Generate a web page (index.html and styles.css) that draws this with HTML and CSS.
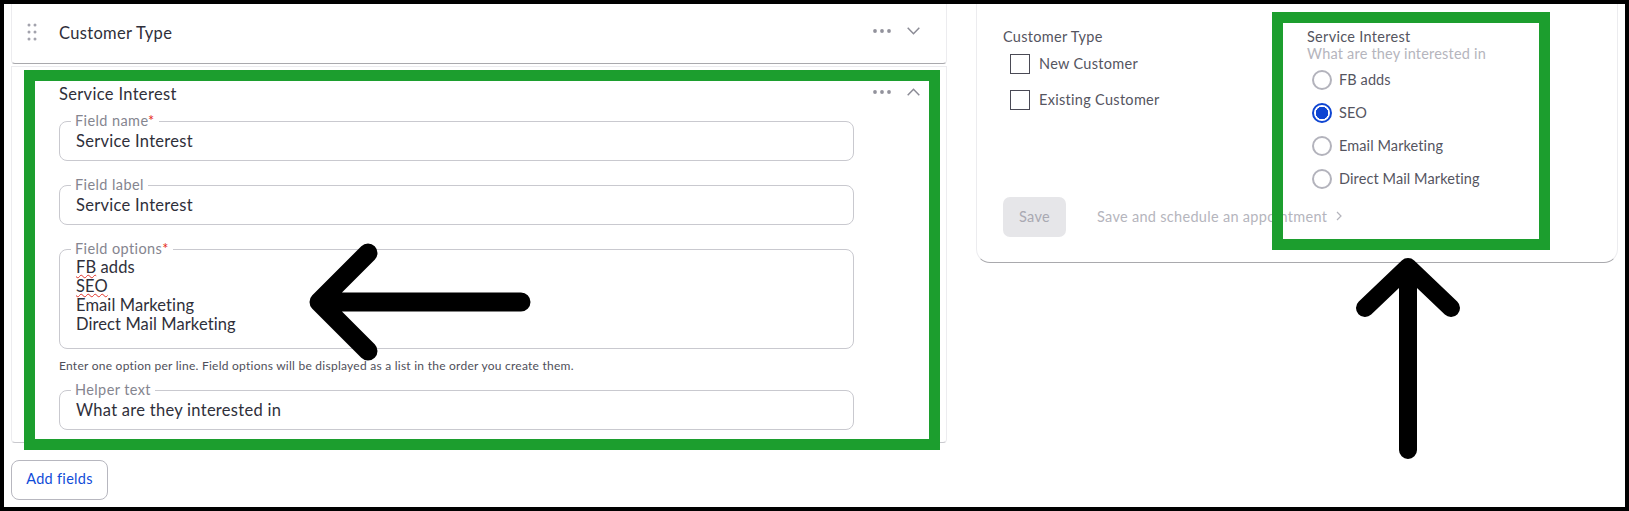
FILE: index.html
```html
<!DOCTYPE html>
<html lang="en">
<head>
<meta charset="utf-8">
<title>Service Interest field</title>
<link rel="stylesheet" href="styles.css">
</head>
<body>
<main class="frame">
  <section class="builder">
    <article class="card card-closed">
      <svg class="handle" width="10" height="18" viewBox="0 0 10 18"><g fill="#a3a3ad"><circle cx="2" cy="2" r="1.5"/><circle cx="8" cy="2" r="1.5"/><circle cx="2" cy="9" r="1.5"/><circle cx="8" cy="9" r="1.5"/><circle cx="2" cy="16" r="1.5"/><circle cx="8" cy="16" r="1.5"/></g></svg>
      <h2 class="card-title">Customer Type</h2>
      <div class="tools tools-closed">
        <svg width="18" height="6" viewBox="0 0 18 6"><g fill="#92929c"><circle cx="2" cy="3" r="1.9"/><circle cx="9" cy="3" r="1.9"/><circle cx="16" cy="3" r="1.9"/></g></svg>
        <svg width="13" height="8" viewBox="0 0 13 8"><path d="M.7.7l5.8 6 5.8-6" fill="none" stroke="#8b8b95" stroke-width="1.5"/></svg>
      </div>
    </article>
    <article class="card card-open">
      <header class="open-head">
        <h2 class="card-title">Service Interest</h2>
        <div class="tools tools-open">
          <svg width="18" height="6" viewBox="0 0 18 6"><g fill="#92929c"><circle cx="2" cy="3" r="1.9"/><circle cx="9" cy="3" r="1.9"/><circle cx="16" cy="3" r="1.9"/></g></svg>
          <svg width="13" height="8" viewBox="0 0 13 8"><path d="M.7 7.3l5.8-6 5.8 6" fill="none" stroke="#8b8b95" stroke-width="1.5"/></svg>
        </div>
      </header>
      <fieldset class="field">
        <legend>Field name<span class="req">*</span></legend>
        <div class="value">Service Interest</div>
      </fieldset>
      <fieldset class="field">
        <legend>Field label</legend>
        <div class="value">Service Interest</div>
      </fieldset>
      <fieldset class="field">
        <legend>Field options<span class="req">*</span></legend>
        <div class="value value-multi"><span class="spell">FB</span> adds<br><span class="spell">SEO</span><br>Email Marketing<br>Direct Mail Marketing</div>
      </fieldset>
      <p class="hint">Enter one option per line. Field options will be displayed as a list in the order you create them.</p>
      <fieldset class="field">
        <legend>Helper text</legend>
        <div class="value">What are they interested in</div>
      </fieldset>
    </article>
    <button class="add-btn" type="button">Add fields</button>
  </section>

  <section class="preview">
    <div class="preview-grid">
      <div class="group">
        <div class="group-label">Customer Type</div>
        <ul class="checks">
          <li class="option"><span class="box"></span>New Customer</li>
          <li class="option"><span class="box"></span>Existing Customer</li>
        </ul>
      </div>
      <div class="group">
        <div class="group-label">Service Interest</div>
        <div class="group-help">What are they interested in</div>
        <ul class="radios">
          <li class="option"><span class="radio"></span>FB adds</li>
          <li class="option"><span class="radio radio-on"></span>SEO</li>
          <li class="option"><span class="radio"></span>Email Marketing</li>
          <li class="option"><span class="radio"></span>Direct Mail Marketing</li>
        </ul>
      </div>
    </div>
    <div class="actions">
      <button class="save-btn" type="button">Save</button>
      <span class="schedule">Save and schedule an appointment</span>
      <svg class="chev" width="6" height="10" viewBox="0 0 6 10"><path d="M1 1l4 4-4 4" fill="none" stroke="#b4b4bc" stroke-width="1.2"/></svg>
    </div>
  </section>

  <div class="mark mark-left"></div>
  <div class="mark mark-right"></div>
  <svg class="arrow arrow-left" width="240" height="120" viewBox="0 0 240 120"><path d="M11 60H213M60 11L11 60L60 109" fill="none" stroke="#000" stroke-width="19" stroke-linecap="round" stroke-linejoin="round"/></svg>
  <svg class="arrow arrow-up" width="120" height="210" viewBox="0 0 120 210"><path d="M60 11V194M17 52L60 11L103 52" fill="none" stroke="#000" stroke-width="18" stroke-linecap="round" stroke-linejoin="round"/></svg>
</main>
</body>
</html>
```
FILE: styles.css
```css
* { box-sizing: border-box; }
html, body { margin: 0; padding: 0; background: #000; }
body { font-family: "Lato", "Open Sans", sans-serif; color: #2f2f3a; }

.frame {
  position: relative;
  display: flex;
  width: 1629px;
  height: 511px;
  border: 4px solid #000;
  background: #fff;
  overflow: hidden;
}

.builder { width: 936px; margin-left: 7px; flex: none; }

.card {
  background: #fff;
  border: 1px solid #ececef;
  border-top: 0;
  border-radius: 0 0 4px 4px;
}
.card-closed {
  display: flex;
  align-items: center;
  height: 60px;
  padding: 0 26px 1px 15px;
  border-bottom: 1px solid #a9a9ad;
}
.card-title { margin: 0; font-size: 16.5px; font-weight: 400; letter-spacing: .33px; line-height: 20px; }
.handle { margin-right: 22px; margin-bottom: 2px; flex: none; }
.card-closed .card-title { flex: 1; }
.tools { display: flex; align-items: center; gap: 16px; }
.tools-closed { margin-bottom: 5px; }
.tools-closed svg { display: block; }

.card-open {
  height: 377px;
  margin-top: 2px;
  padding: 17px 92px 0 47px;
  border-top: 1px solid #ececef;
  border-bottom: 1px solid #c9c9ce;
}
.open-head { position: relative; height: 29px; }
.tools-open { position: absolute; right: -66px; top: 4px; }

.field {
  margin: 0 0 16px;
  padding: 0 15px;
  min-width: 0;
  border: 1px solid #c9c9cf;
  border-radius: 8px;
}
.field legend {
  margin-left: -4px;
  padding: 0 4px;
  font-size: 14.5px;
  line-height: 16px;
  letter-spacing: .4px;
  color: #85858f;
}
.req { color: #e5281a; }
.value { height: 31px; padding-left: 1px; font-size: 16.5px; line-height: 25px; letter-spacing: .28px; color: #2f2f3a; }
.value-multi { height: 91px; padding-top: 1px; line-height: 19px; letter-spacing: .1px; }
.spell { text-decoration: underline wavy #e0342b 1px; text-underline-offset: 1px; }
.hint { margin: -7px 0 8px; font-size: 12px; line-height: 16px; letter-spacing: .25px; color: #4f4f5a; }
.hint + .field { margin-bottom: 0; }

.add-btn {
  display: block;
  width: 97px;
  height: 40px;
  margin-top: 17px;
  padding: 0 0 3px;
  background: #fff;
  border: 1px solid #b7b7bf;
  border-radius: 8px;
  font: 400 14.5px "Lato", sans-serif;
  letter-spacing: .3px;
  color: #0f4bd8;
}

.preview {
  width: 642px;
  height: 259px;
  margin-left: 29px;
  flex: none;
  padding: 23px 25px 0 26px;
  border: 1px solid #ececef;
  border-top: 0;
  border-bottom: 1px solid #a9a9ad;
  border-radius: 0 0 14px 14px;
  background: #fff;
}
.preview-grid { display: grid; grid-template-columns: 304px 1fr; height: 170px; }
.group-label, .option { font-size: 14.5px; letter-spacing: .3px; color: #55555f; }
.radios .option { letter-spacing: .1px; }
.group-label { line-height: 20px; }
.group-help { margin-top: -1px; font-size: 14.5px; line-height: 16px; letter-spacing: .2px; color: #b5b5bd; }
.checks, .radios { margin: 0; padding: 0; list-style: none; display: flex; flex-direction: column; }
.checks { gap: 16px; margin: 7px 0 0 7px; }
.radios { gap: 13px; margin: 8px 0 0 5px; }
.option { display: flex; align-items: center; gap: 9px; height: 20px; line-height: 20px; }
.box { width: 20px; height: 20px; border: 1px solid #4a4a55; flex: none; }
.radio { width: 20px; height: 20px; margin-right: -2px; border: 2px solid #b3b3bc; border-radius: 50%; flex: none; }
.radio-on { border: 2px solid #0f45d2; background: radial-gradient(circle, #0f45d2 0 6px, #fff 6.5px); }

.actions { display: flex; align-items: center; }
.save-btn {
  width: 63px;
  height: 40px;
  padding: 0 0 1px;
  border: 0;
  border-radius: 7px;
  background: #e6e6e9;
  font: 400 14.5px "Lato", sans-serif;
  letter-spacing: .3px;
  color: #a9a9b2;
}
.schedule { margin: 0 0 2px 31px; font-size: 14.5px; letter-spacing: .3px; color: #b5b5bd; }
.chev { margin: 0 0 2px 9px; }

.mark { position: absolute; border: 11px solid #1c9e2e; pointer-events: none; }
.mark-left { left: 20px; top: 66px; width: 916px; height: 380px; }
.mark-right { left: 1268px; top: 8px; width: 278px; height: 238px; }
.arrow { position: absolute; pointer-events: none; }
.arrow-left { left: 304px; top: 238px; }
.arrow-up { left: 1344px; top: 252px; }
```
